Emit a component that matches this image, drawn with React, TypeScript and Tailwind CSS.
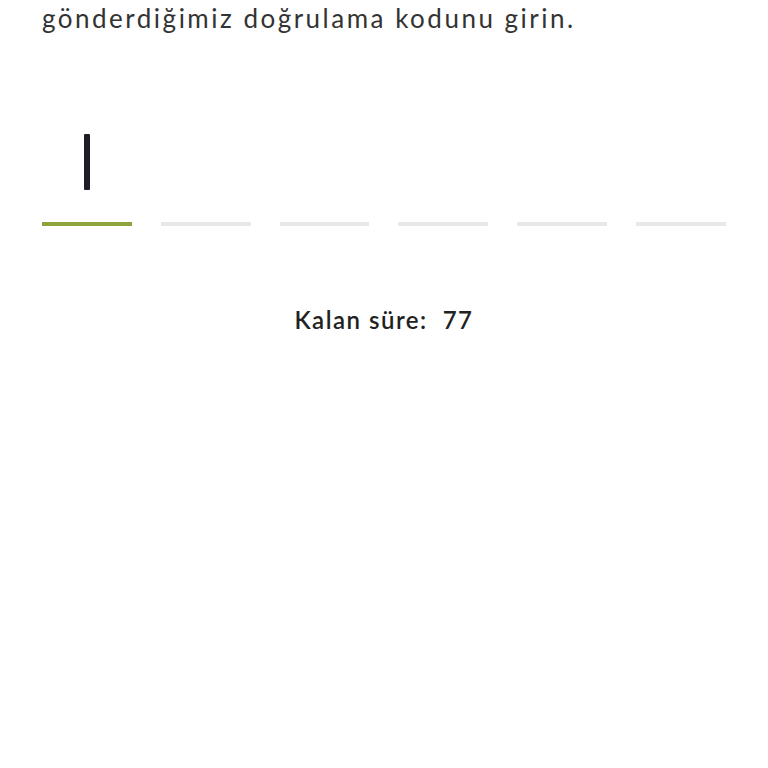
import { useState } from 'react';

const CODE_LENGTH = 6;

export default function App() {
  const [code] = useState('');
  const active = code.length;

  return (
    <div className="min-h-screen bg-white px-[42px] font-['Lato',sans-serif] text-[#2b2b2b]">
      <p className="text-[26px] leading-[36px] tracking-[2.5px] text-[#333]">
        gönderdiğimiz doğrulama kodunu girin.
      </p>

      {/* code inputs */}
      <div className="mt-[98px] flex gap-[29px]">
        {Array.from({ length: CODE_LENGTH }).map((_, i) => (
          <div key={i} className="flex w-[90px] flex-col items-center">
            <div className="flex h-[88px] items-start justify-center">
              {i === active && <span className="h-[56px] w-[6px] rounded-[1px] bg-[#1e1f26]" />}
            </div>
            <div className={'h-[4px] w-full ' + (i === active ? 'bg-[#8fa33c]' : 'bg-[#e8e8e8]')} />
          </div>
        ))}
      </div>

      <div className="mt-[76px] flex justify-center text-[24px] font-semibold tracking-[1.5px] text-[#222]">
        Kalan süre:&nbsp;&nbsp;77
      </div>
    </div>
  );
}
